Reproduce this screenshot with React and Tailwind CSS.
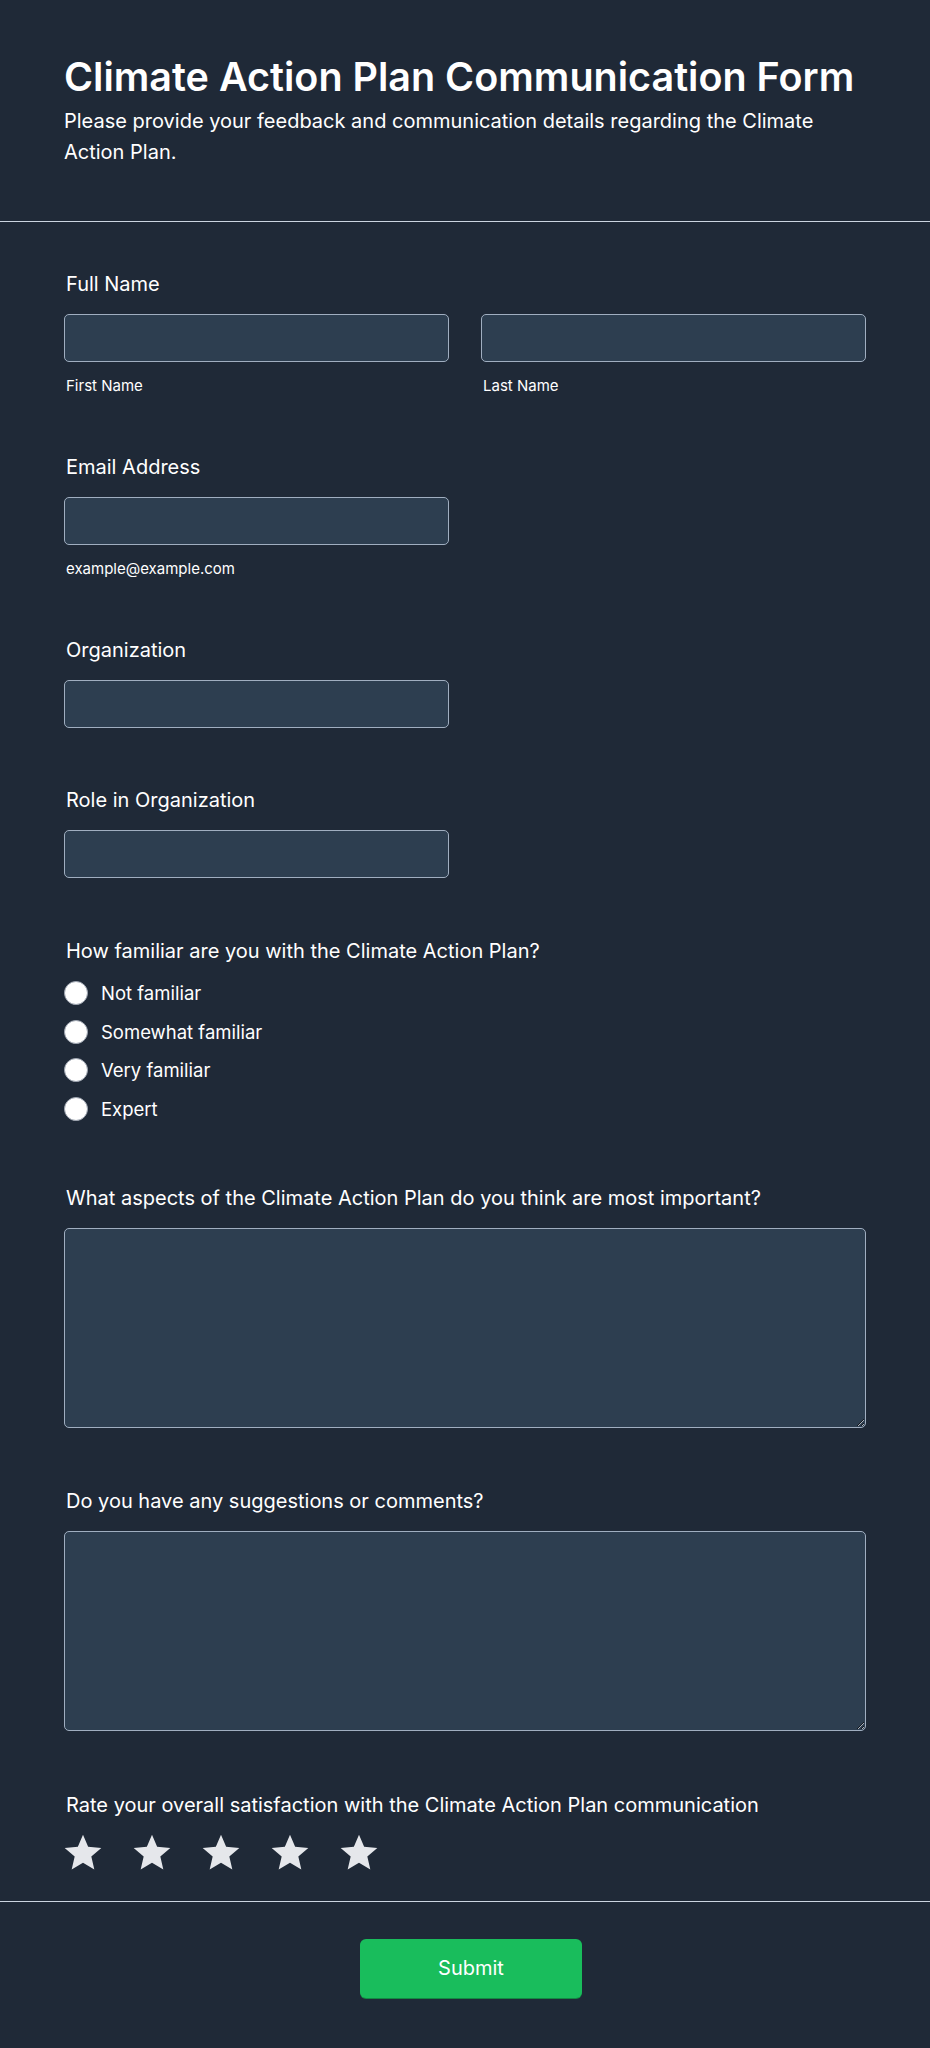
import { useState } from 'react'

const FAMILIARITY = ['Not familiar', 'Somewhat familiar', 'Very familiar', 'Expert']

function Label({ children, className = '' }) {
  return <label className={`block pl-0.5 text-xl leading-7 text-white ${className}`}>{children}</label>
}

function TextInput() {
  return (
    <input
      type="text"
      className="h-12 w-full rounded-[5px] border border-[#a0aec0] bg-[#2d3e50] px-3 text-base text-white outline-none"
    />
  )
}

function Star({ active }) {
  return (
    <svg width="44" height="44" viewBox="0 0 24 24" className="block">
      <path
        d="M12 17.27L18.18 21l-1.64-7.03L22 9.24l-7.19-.61L12 2 9.19 8.63 2 9.24l5.46 4.73L5.82 21z"
        fill={active ? '#facc15' : '#e5e7eb'}
      />
    </svg>
  )
}

export default function App() {
  const [familiarity, setFamiliarity] = useState(null)
  const [rating, setRating] = useState(0)

  return (
    <div className="min-h-screen bg-[#1f2937] font-['Inter','Noto_Sans',sans-serif] text-white">
      {/* Header */}
      <div className="border-b border-[#cbd5e0] pt-[57px] pb-[53px]">
        <div className="mx-auto max-w-[802px]">
          <h1 className="text-[39.5px] leading-10 font-semibold text-white">
            Climate Action Plan Communication Form
          </h1>
          <p className="mt-[9px] text-xl leading-[31px] text-white">
            Please provide your feedback and communication details regarding the Climate Action Plan.
          </p>
        </div>
      </div>

      {/* Form body */}
      <div className="mx-auto max-w-[802px] pt-12 pb-[26px]">
        <div>
          <Label>Full Name</Label>
          <div className="mt-4 grid grid-cols-2 gap-8">
            <div>
              <TextInput />
              <p className="mt-[14px] pl-0.5 text-[15px] leading-5 text-white">First Name</p>
            </div>
            <div>
              <TextInput />
              <p className="mt-[14px] pl-0.5 text-[15px] leading-5 text-white">Last Name</p>
            </div>
          </div>
        </div>

        <div className="mt-[57px]">
          <Label>Email Address</Label>
          <div className="mt-4 grid grid-cols-2 gap-8">
            <div>
              <TextInput />
              <p className="mt-[14px] pl-0.5 text-[15px] leading-5 text-white">example@example.com</p>
            </div>
          </div>
        </div>

        <div className="mt-[57px]">
          <Label>Organization</Label>
          <div className="mt-4 grid grid-cols-2 gap-8">
            <TextInput />
          </div>
        </div>

        <div className="mt-[58px]">
          <Label>Role in Organization</Label>
          <div className="mt-4 grid grid-cols-2 gap-8">
            <TextInput />
          </div>
        </div>

        <div className="mt-[59px]">
          <Label>How familiar are you with the Climate Action Plan?</Label>
          <div className="mt-[14px] flex flex-col gap-[10.5px]">
            {FAMILIARITY.map((opt) => (
              <button
                key={opt}
                type="button"
                onClick={() => setFamiliarity(opt)}
                className="flex items-center gap-[13px] text-left"
              >
                <span className="flex h-6 w-6 items-center justify-center rounded-full border border-[#9ca3af] bg-white">
                  {familiarity === opt && <span className="h-2.5 w-2.5 rounded-full bg-[#1f2937]" />}
                </span>
                <span className="text-[18.5px] leading-7 text-white">{opt}</span>
              </button>
            ))}
          </div>
        </div>

        <div className="mt-[61px]">
          <Label>What aspects of the Climate Action Plan do you think are most important?</Label>
          <textarea className="mt-4 block h-[200px] w-full rounded-[5px] border border-[#a0aec0] bg-[#2d3e50] p-3 text-base text-white outline-none" />
        </div>

        <div className="mt-[59px]">
          <Label>Do you have any suggestions or comments?</Label>
          <textarea className="mt-4 block h-[200px] w-full rounded-[5px] border border-[#a0aec0] bg-[#2d3e50] p-3 text-base text-white outline-none" />
        </div>

        <div className="mt-[60px]">
          <Label>Rate your overall satisfaction with the Climate Action Plan communication</Label>
          <div className="mt-3 -ml-[3px] flex gap-[25px]">
            {[1, 2, 3, 4, 5].map((n) => (
              <button key={n} type="button" onClick={() => setRating(n)}>
                <Star active={n <= rating} />
              </button>
            ))}
          </div>
        </div>
      </div>

      {/* Footer */}
      <div className="border-t border-[#cbd5e0] pt-[37px] pb-[50px]">
        <div className="flex justify-center pl-3">
          <button
            type="button"
            className="h-[59px] w-[222px] rounded-md bg-[#19bd5c] text-xl font-normal text-white shadow-[0_1px_0_#128a43]"
          >
            Submit
          </button>
        </div>
      </div>
    </div>
  )
}
